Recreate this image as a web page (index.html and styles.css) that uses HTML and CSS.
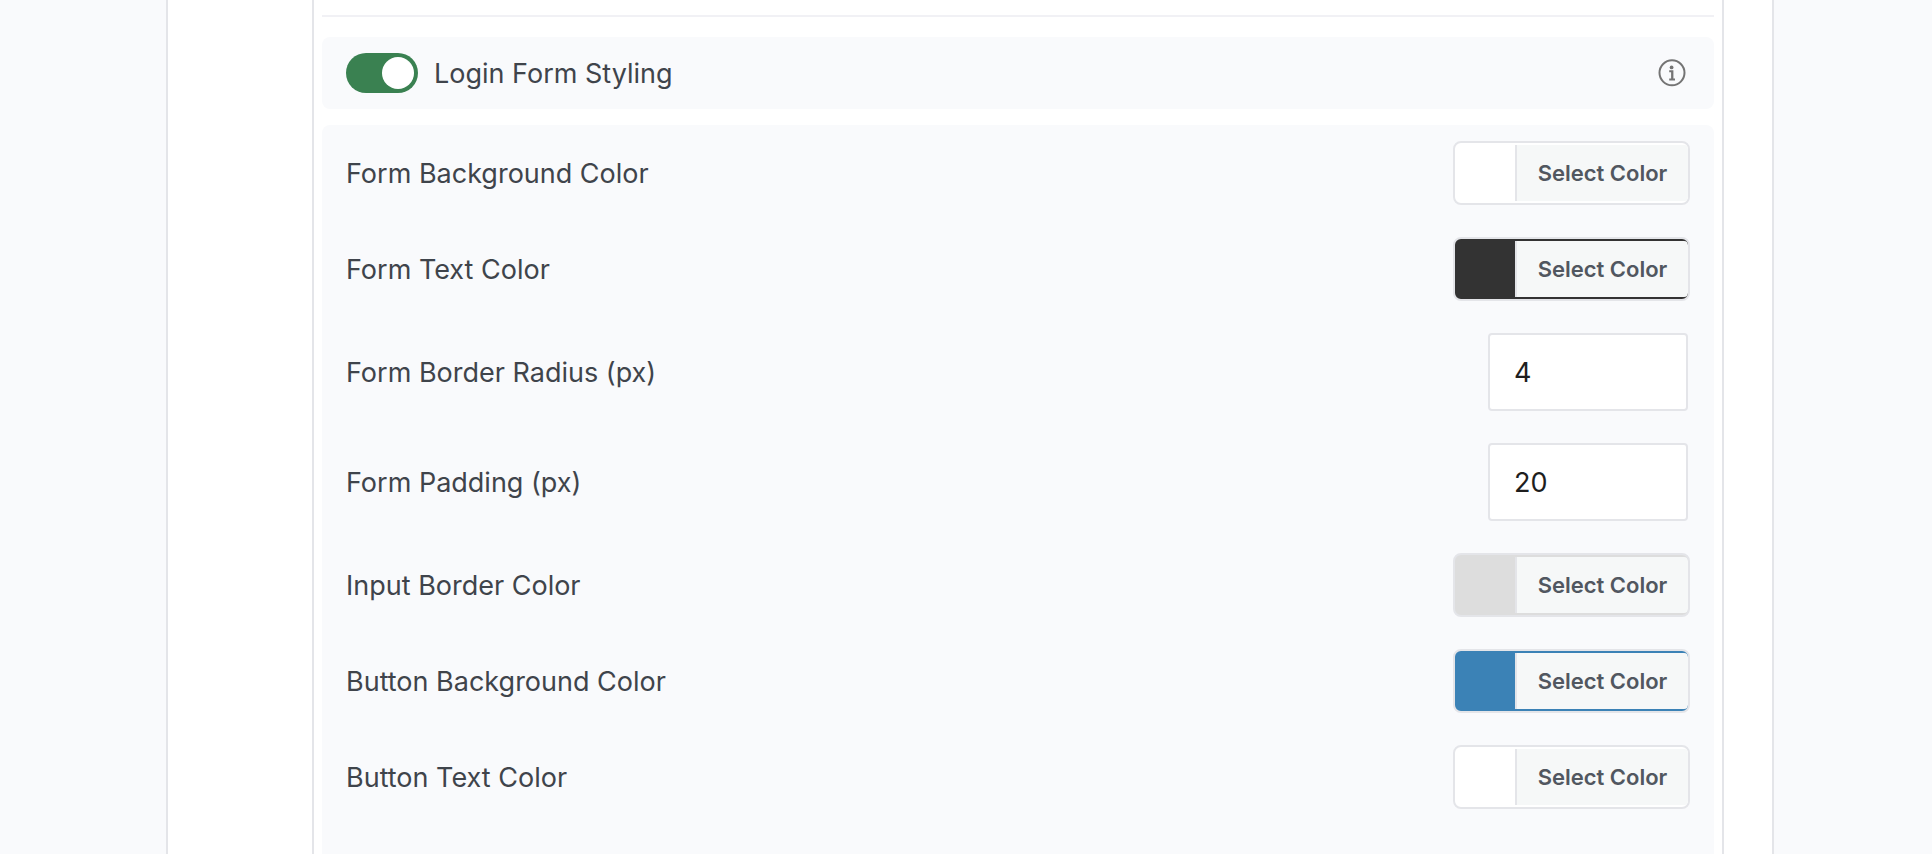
FILE: index.html
```html
<!DOCTYPE html>
<html lang="en">
<head>
    <meta charset="UTF-8" />
    <meta name="viewport" content="width=device-width, initial-scale=1" />
    <title>Login Form Styling</title>
    <link rel="stylesheet" href="styles.css">
</head>
<body>
<main class="page">
    <div class="panel">
        <hr class="divider">

        <div class="section-header">
            <input type="checkbox" role="switch" class="toggle" id="loginFormStyling" checked>
            <label for="loginFormStyling">Login Form Styling</label>
            <button type="button" class="btn-info" aria-label="More information">
                <svg width="28" height="28" viewBox="0 0 28 28" aria-hidden="true">
                    <circle cx="14" cy="13.8" r="12.5" fill="none" stroke="currentColor" stroke-width="2" />
                    <circle cx="13.6" cy="8.4" r="1.9" fill="currentColor" />
                    <path d="M11.2 11.2h4.2v8.2h1.6v2h-5.8v-2h1.9v-6.2h-1.9z" fill="currentColor" />
                </svg>
            </button>
        </div>

        <form class="settings">
            <div class="row">
                <label for="formBackground">Form Background Color</label>
                <button type="button" class="btn-color swatch-white" id="formBackground"><span>Select Color</span></button>
            </div>
            <div class="row">
                <label for="formText">Form Text Color</label>
                <button type="button" class="btn-color swatch-dark" id="formText"><span>Select Color</span></button>
            </div>
            <div class="row">
                <label for="formRadius">Form Border Radius (px)</label>
                <input type="number" class="number-field" id="formRadius" value="4" min="0">
            </div>
            <div class="row">
                <label for="formPadding">Form Padding (px)</label>
                <input type="number" class="number-field" id="formPadding" value="20" min="0">
            </div>
            <div class="row">
                <label for="inputBorder">Input Border Color</label>
                <button type="button" class="btn-color swatch-gray" id="inputBorder"><span>Select Color</span></button>
            </div>
            <div class="row">
                <label for="buttonBackground">Button Background Color</label>
                <button type="button" class="btn-color swatch-blue" id="buttonBackground"><span>Select Color</span></button>
            </div>
            <div class="row">
                <label for="buttonText">Button Text Color</label>
                <button type="button" class="btn-color swatch-white" id="buttonText"><span>Select Color</span></button>
            </div>
        </form>
    </div>
</main>
</body>
</html>
```
FILE: styles.css
```css
:root {
    --surface: #f9fafc;
    --border: #e4e5e9;
    --divider: #f1f1f5;
    --text: #3f444b;
    --text-button: #515760;
    --green: #3a8151;
}

* {
    box-sizing: border-box;
}

body {
    margin: 0;
    background: var(--surface);
    color: var(--text);
    font-family: Inter, sans-serif;
    font-size: 27px;
    line-height: 38px;
}

label {
    padding-top: 2px;
}

.page {
    display: flex;
    min-height: 100vh;
    margin: 0 158px 0 166px;
    padding: 0 48px 0 144px;
    background: #fff;
    border: solid var(--border);
    border-width: 0 2px;
}

.panel {
    flex: 1;
    display: flex;
    flex-direction: column;
    padding: 15px 8px 0;
    border: solid var(--border);
    border-width: 0 2px;
}

.divider {
    width: 100%;
    height: 2px;
    margin: 0 0 20px;
    border: 0;
    background: var(--divider);
}

.section-header {
    display: flex;
    align-items: center;
    gap: 16px;
    margin-bottom: 16px;
    padding: 16px 24px;
    background: var(--surface);
    border-radius: 8px;
}

.toggle {
    appearance: none;
    display: flex;
    justify-content: flex-end;
    width: 72px;
    height: 40px;
    margin: 0;
    padding: 4px;
    border-radius: 20px;
    background: var(--green);
    cursor: pointer;
}

.toggle::before {
    content: "";
    width: 32px;
    height: 32px;
    border-radius: 50%;
    background: #fff;
}

.toggle:not(:checked) {
    justify-content: flex-start;
    background: #8c8f94;
}

.btn-info {
    display: flex;
    margin-left: auto;
    padding: 4px;
    border: 0;
    background: none;
    color: #747474;
    cursor: pointer;
}

.settings {
    flex: 1;
    background: var(--surface);
    border-radius: 8px 8px 0 0;
    padding-bottom: 16px;
}

.row {
    display: flex;
    justify-content: space-between;
    align-items: center;
    padding: 16px 24px;
}

.btn-color {
    display: flex;
    height: 64px;
    padding: 2px 0 2px 60px;
    border: 2px solid var(--border);
    border-radius: 8px;
    overflow: hidden;
    cursor: pointer;
}

.btn-color span {
    min-width: 173px;
    padding: 0 20px;
    border-left: 2px solid var(--border);
    border-radius: 0 4px 4px 0;
    background: #f6f8f8;
    color: var(--text-button);
    font: 600 22px/56px Inter, sans-serif;
    text-align: center;
}

.swatch-white {
    background: #fff;
}

.swatch-dark {
    background: #333;
}

.swatch-gray {
    background: #ddd;
}

.swatch-blue {
    background: #3b82b6;
}

.number-field {
    appearance: textfield;
    width: 200px;
    height: 78px;
    margin: 0 2px 0 0;
    padding: 0 24px;
    border: 2px solid var(--border);
    border-radius: 4px;
    background: #fff;
    color: #1e1e1e;
    font: inherit;
}

.number-field::-webkit-inner-spin-button {
    appearance: none;
    margin: 0;
}
```
